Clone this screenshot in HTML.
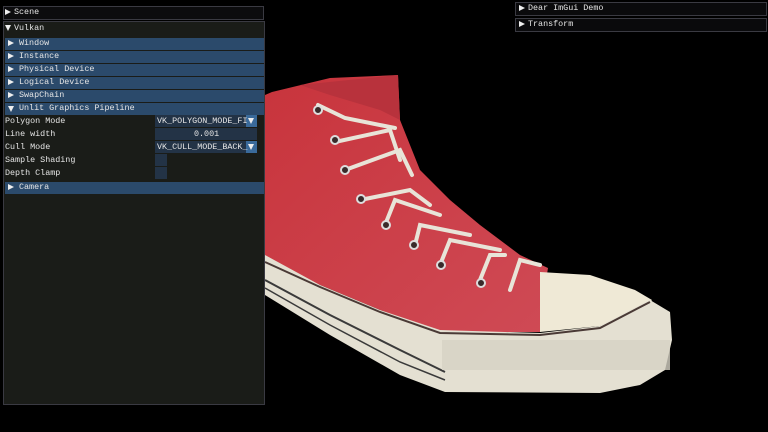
<!DOCTYPE html>
<html><head><meta charset="utf-8"><style>
*{margin:0;padding:0;box-sizing:border-box}
body{width:768px;height:432px;background:#000;position:relative;overflow:hidden;font-family:"Liberation Mono",monospace;font-size:8.4px;color:#e6e6e6}
.a{position:absolute;white-space:pre;line-height:11px}
.win{position:absolute;border:1px solid #3a3a42}
.hdr{position:absolute;left:5px;width:259px;height:12px;background:#2b4a6b}
.tri{position:absolute;width:0;height:0}
.r{border-top:3.5px solid transparent;border-bottom:3.5px solid transparent;border-left:6px solid #eee}
.d{border-left:3.5px solid transparent;border-right:3.5px solid transparent;border-top:6px solid #eee}
.fr{position:absolute;background:#233346}
</style></head><body>
<svg width="768" height="432" style="position:absolute;left:0;top:0">
<defs><linearGradient id="g" x1="0" y1="0" x2="1" y2="1"><stop offset="0" stop-color="#c8343c"/><stop offset="1" stop-color="#cf4a55"/></linearGradient></defs>
<polygon points="265,95 272,92 330,78 398,75 400,120 420,170 450,200 480,225 520,255 548,268 542,305 540,332 440,332 380,310 320,285 265,262" fill="url(#g)"/>
<polygon points="300,85 398,75 400,120 380,110 330,95" fill="#b8323c"/>
<polygon points="540,272 590,275 635,290 652,300 640,318 600,326 540,332" fill="#efe9d6"/>
<polygon points="265,255 320,285 380,310 440,330 540,333 600,326 650,300 670,312 672,340 665,370 640,385 600,393 445,392 400,375 330,335 265,295" fill="#e4e0d2"/>
<polyline points="265,262 320,287 380,312 440,333 540,335 600,328 650,302" fill="none" stroke="#4a3a36" stroke-width="2"/>
<polyline points="265,280 330,315 400,350 445,372" fill="none" stroke="#3a3a3a" stroke-width="2"/>
<polyline points="265,288 330,325 400,362 445,380" fill="none" stroke="#3a3a3a" stroke-width="1.5"/>
<rect x="442" y="340" width="228" height="30" fill="#d6d2c4" opacity=".8"/>
<g fill="none" stroke="#e8e4d8" stroke-width="4" stroke-linecap="round">
<path d="M318,105 L345,118 L395,128"/><path d="M335,142 L390,130 L400,160"/><path d="M345,170 L400,150 L412,175"/>
<path d="M360,200 L410,190 L430,205"/><path d="M385,225 L395,200 L440,215"/><path d="M415,245 L420,225 L470,235"/>
<path d="M440,265 L450,240 L500,250"/><path d="M480,280 L490,255 L505,255"/><path d="M510,290 L520,260 L540,265"/>
</g>
<g fill="#3a2a2a" stroke="#ddd" stroke-width="2">
<circle cx="318" cy="110" r="4"/><circle cx="335" cy="140" r="4"/><circle cx="345" cy="170" r="4"/><circle cx="361" cy="199" r="4"/><circle cx="386" cy="225" r="4"/><circle cx="414" cy="245" r="4"/><circle cx="441" cy="265" r="4"/><circle cx="481" cy="283" r="4"/>
</g>
</svg>

<div class="win" style="left:3px;top:6px;width:261px;height:14px;background:#0c0c0e"></div>
<div class="tri r" style="left:5px;top:9px"></div><div class="a" style="left:14px;top:7px">Scene</div>

<div class="win" style="left:3px;top:21px;width:262px;height:384px;background:#1a1c18"></div>
<div class="tri d" style="left:5px;top:25px"></div><div class="a" style="left:14px;top:23px">Vulkan</div>

<div class="hdr" style="top:38px"></div><div class="tri r" style="left:8px;top:40px"></div><div class="a" style="left:19px;top:38px">Window</div>
<div class="hdr" style="top:51px"></div><div class="tri r" style="left:8px;top:53px"></div><div class="a" style="left:19px;top:51px">Instance</div>
<div class="hdr" style="top:64px"></div><div class="tri r" style="left:8px;top:66px"></div><div class="a" style="left:19px;top:64px">Physical Device</div>
<div class="hdr" style="top:77px"></div><div class="tri r" style="left:8px;top:79px"></div><div class="a" style="left:19px;top:77px">Logical Device</div>
<div class="hdr" style="top:90px"></div><div class="tri r" style="left:8px;top:92px"></div><div class="a" style="left:19px;top:90px">SwapChain</div>
<div class="hdr" style="top:103px"></div><div class="tri d" style="left:8px;top:106px"></div><div class="a" style="left:19px;top:103px">Unlit Graphics Pipeline</div>

<div class="a" style="left:5px;top:116px">Polygon Mode</div>
<div class="fr" style="left:155px;top:115px;width:91px;height:12px"></div>
<div class="fr" style="left:246px;top:115px;width:11px;height:12px;background:#3a6a9a"></div>
<div class="tri d" style="left:248px;top:118px"></div>
<div class="a" style="left:157px;top:116px">VK_POLYGON_MODE_FI</div>

<div class="a" style="left:5px;top:129px">Line width</div>
<div class="fr" style="left:155px;top:128px;width:102px;height:12px"></div>
<div class="a" style="left:194px;top:129px">0.001</div>

<div class="a" style="left:5px;top:142px">Cull Mode</div>
<div class="fr" style="left:155px;top:141px;width:91px;height:12px"></div>
<div class="fr" style="left:246px;top:141px;width:11px;height:12px;background:#3a6a9a"></div>
<div class="tri d" style="left:248px;top:144px"></div>
<div class="a" style="left:157px;top:142px">VK_CULL_MODE_BACK_</div>

<div class="a" style="left:5px;top:155px">Sample Shading</div>
<div class="fr" style="left:155px;top:154px;width:12px;height:12px"></div>
<div class="a" style="left:5px;top:168px">Depth Clamp</div>
<div class="fr" style="left:155px;top:167px;width:12px;height:12px"></div>

<div class="hdr" style="top:182px"></div><div class="tri r" style="left:8px;top:184px"></div><div class="a" style="left:19px;top:182px">Camera</div>

<div class="win" style="left:515px;top:2px;width:252px;height:14px;background:#0a0a0c"></div>
<div class="tri r" style="left:519px;top:5px"></div><div class="a" style="left:528px;top:3px">Dear ImGui Demo</div>
<div class="win" style="left:515px;top:18px;width:252px;height:14px;background:#0a0a0c"></div>
<div class="tri r" style="left:519px;top:21px"></div><div class="a" style="left:528px;top:19px">Transform</div>
</body></html>
